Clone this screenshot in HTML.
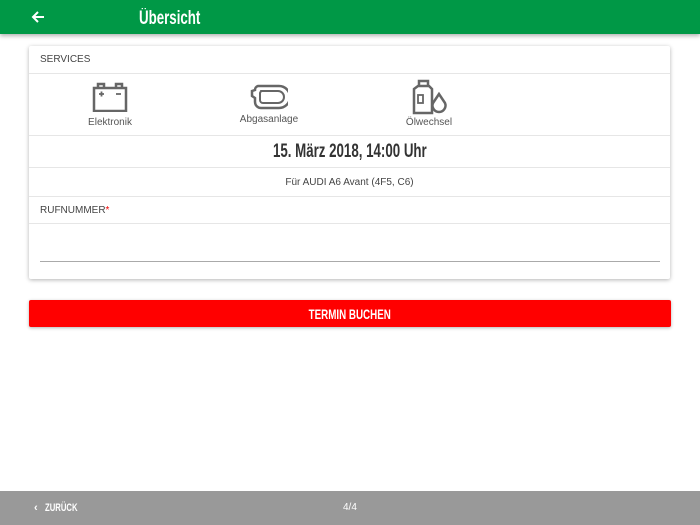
<!DOCTYPE html>
<html><head><meta charset="utf-8"><style>
*{margin:0;padding:0;box-sizing:border-box}
body{width:700px;height:525px;background:#fff;font-family:"Liberation Sans",sans-serif;position:relative;overflow:hidden}
.sx{display:inline-block;white-space:nowrap}
.hdr{position:absolute;left:0;top:0;width:700px;height:34px;background:#009846;box-shadow:0 2px 4px rgba(0,0,0,.3)}
.hdr .t{position:absolute;left:139px;top:8px;color:#fff;font-size:19px;font-weight:bold;transform:scaleX(.7);transform-origin:left}
.card{position:absolute;left:29px;top:46px;width:641px;height:233px;background:#fff;box-shadow:0 1px 4px rgba(0,0,0,.3);border-radius:2px}
.row{position:absolute;left:0;width:641px;border-bottom:1px solid #e6e6e6}
.lbl{font-size:10px;color:#444;position:absolute;left:11px}
.ic{position:absolute;text-align:center;font-size:10px;color:#555;width:120px}
.btn{position:absolute;left:29px;top:300px;width:642px;height:27px;background:#f00;border-radius:2px;color:#fff;text-align:center;font-size:14px;font-weight:bold;line-height:29px;box-shadow:0 1px 3px rgba(0,0,0,.3)}
.ftr{position:absolute;left:0;top:491px;width:700px;height:34px;background:#999;color:#fff;font-size:11px;font-weight:bold}
</style></head><body>
<div class="hdr">
<svg style="position:absolute;left:31px;top:10px" width="14" height="14" viewBox="0 0 14 14"><path d="M13 7H2M7 2L2 7l5 5" stroke="#fff" stroke-width="2" fill="none"/></svg>
<div class="t">Übersicht</div></div>
<div class="card">
<div class="row" style="top:0;height:28px"><span class="lbl" style="top:8px">SERVICES</span></div>
<div class="row" style="top:28px;height:62px">
<div class="ic" style="left:21px;top:8px"><svg width="36" height="30" viewBox="0 0 36 30"><path d="M2 6h32v23H2zM6 6V2h6v4M24 6V2h6v4" fill="none" stroke="#666" stroke-width="2.5"/><path d="M7 12h5M9.5 9.5v5M24 12h5" stroke="#666" stroke-width="1.8"/></svg><div style="margin-top:2px">Elektronik</div></div>
<div class="ic" style="left:180px;top:10px"><svg width="38" height="26" viewBox="0 0 38 26"><path d="M8 2h21a8 8 0 0 1 0 22H11a6 6 0 0 1-6-6V14l-3-2V7l3-1a4 4 0 0 1 3-4z" fill="none" stroke="#666" stroke-width="2.5"/><path d="M11 7h17a4.5 4.5 0 0 1 0 12H13a3 3 0 0 1-3-3V9z" fill="none" stroke="#666" stroke-width="2"/></svg><div style="margin-top:1px">Abgasanlage</div></div>
<div class="ic" style="left:340px;top:5px"><svg width="38" height="36" viewBox="0 0 38 36"><path d="M9 2h9v5H9zM4 10l4-3h11l3 3v24H4z" fill="none" stroke="#666" stroke-width="2.5"/><rect x="8" y="16" width="5" height="8" fill="none" stroke="#666" stroke-width="1.8"/><path d="M29 15l-6 9a6.5 6.5 0 1 0 12 0z" fill="none" stroke="#666" stroke-width="2.5"/></svg><div style="margin-top:-1px">Ölwechsel</div></div>
</div>
<div class="row" style="top:90px;height:32px;text-align:center"><span class="sx" style="font-size:19px;font-weight:bold;color:#333;line-height:32px;transform:scaleX(.7)">15. März 2018, 14:00 Uhr</span></div>
<div class="row" style="top:122px;height:29px;text-align:center;font-size:10px;color:#444;line-height:29px">Für AUDI A6 Avant (4F5, C6)</div>
<div class="row" style="top:151px;height:27px"><span class="lbl" style="top:8px">RUFNUMMER<span style="color:#e00">*</span></span></div>
<div style="position:absolute;left:11px;top:215px;width:620px;height:1px;background:#aaa"></div>
</div>
<div class="btn"><span class="sx" style="transform:scaleX(.7)">TERMIN BUCHEN</span></div>
<div class="ftr"><span style="position:absolute;left:34px;top:11px">‹</span><span style="position:absolute;left:45px;top:11px;transform:scaleX(.7);transform-origin:left">ZURÜCK</span><span style="position:absolute;left:343px;top:11px;font-weight:normal;font-size:10px">4/4</span></div>
</body></html>
